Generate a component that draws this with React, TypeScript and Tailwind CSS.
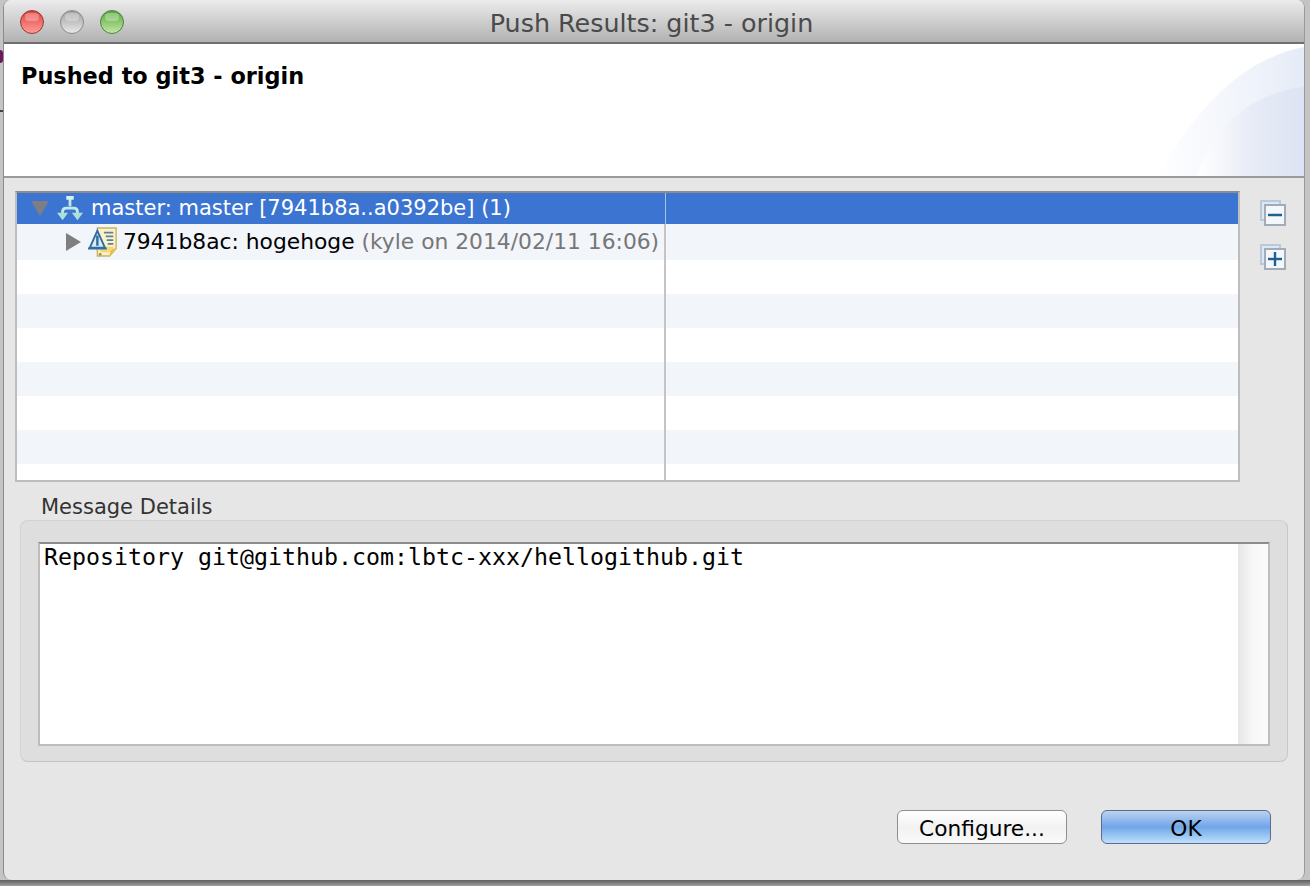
import React from 'react';

const font = { sans: 'font-["DejaVu_Sans",sans-serif]', mono: 'font-["DejaVu_Sans_Mono",monospace]' };

const TrafficLight: React.FC<{ className: string }> = ({ className }) => (
    <div className={`relative w-[24px] h-[24px] rounded-full border ${className}`}>
        <div className="absolute left-[4px] top-[2px] w-[14px] h-[8px] rounded-full bg-white/30" />
    </div>
);

const BranchIcon = () => (
    <svg width="26" height="28" viewBox="0 0 28 28" fill="none">
        <path d="M14 2v9M6 20v-3q0-4 4-4h8q4 0 4 4v3" stroke="#c4e9e3" strokeWidth="3" />
        <rect x="10" y="0" width="8" height="4" fill="#d8f0ec" />
        <path d="M0 18h12l-6 8zM16 18h12l-6 8z" fill="#a9e0da" />
    </svg>
);

const CommitIcon = () => (
    <svg width="30" height="32" viewBox="0 0 32 32" fill="none">
        <path d="M10 1h20v22l-7 8H10z" fill="#fbf3c4" stroke="#c9b26a" strokeWidth="1.5" />
        <path d="M23 31l1-8h6z" fill="#e8c24a" />
        <path d="M13 27h10l5-6H13z" fill="#f5d873" />
        <path d="M17 6h10M19 10h8M20 14h7M21 18h6" stroke="#5c7fa6" strokeWidth="1.8" />
        <path d="M10 4L2 22h16z" fill="#dfeaf4" stroke="#2f6ea5" strokeWidth="2" />
        <path d="M10 9v11" stroke="#2f6ea5" strokeWidth="2.6" />
        <path d="M0 23h20" stroke="#2f6ea5" strokeWidth="2.2" />
        <circle cx="13" cy="29" r="1.4" fill="#a8874a" />
    </svg>
);

const StackIcon: React.FC<{ plus?: boolean }> = ({ plus }) => (
    <svg width="26" height="26" viewBox="0 0 26 26" fill="none">
        <rect x="1" y="1" width="19" height="19" fill="#dfe8f2" stroke="#b9c9dc" strokeWidth="2" />
        <rect x="5" y="5" width="20" height="20" fill="#f3f7fb" stroke="#a3abba" strokeWidth="2" />
        <path d="M8 15h14" stroke="#1f5f8f" strokeWidth="2.4" />
        {plus && <path d="M15 8v14" stroke="#1f5f8f" strokeWidth="2.4" />}
    </svg>
);

const rows = [
    'h-[36px] bg-[#f2f5fa]',
    'h-[34px] bg-white',
    'h-[34px] bg-[#f2f5fa]',
    'h-[34px] bg-white',
    'h-[34px] bg-[#f2f5fa]',
    'h-[34px] bg-white',
    'h-[34px] bg-[#f2f5fa]',
    'h-[16px] bg-white',
];

export default function App() {
    return (
        <div className={`relative w-[1310px] h-[886px] overflow-hidden bg-[#c4c4c4] pl-[3px] pr-[5px] ${font.sans}`}>
            {/* bits of the window behind */}
            <div className="absolute left-0 top-[50px] w-[3px] h-[13px] rounded-r-full bg-[#6a1a5c]" />
            <div className="absolute left-0 top-[110px] w-[3px] h-[2px] bg-[#444]" />
            <div className="absolute left-0 right-0 top-[880px] h-[6px] bg-gradient-to-b from-[#5f5f5f] to-[#a0a0a0]" />

            <div className="relative h-[880px] flex flex-col rounded-t-[8px] rounded-b-[8px] overflow-hidden bg-[#e6e6e6] border-l border-r border-l-[#8c8c8c] border-r-[#9a9a9a]">
                {/* title bar */}
                <div className="relative h-[44px] shrink-0 flex items-center justify-center bg-gradient-to-b from-[#ececec] to-[#b2b2b2] border-b-2 border-[#6f6f6f]">
                    <div className="absolute left-[16px] top-[10px] flex gap-[16px]">
                        <TrafficLight className="bg-gradient-to-b from-[#e03a3a] to-[#ff9a9a] border-[#8f3a3a]" />
                        <TrafficLight className="bg-gradient-to-b from-[#a0a0a0] to-[#e8e8e8] border-[#8a8a8a]" />
                        <TrafficLight className="bg-gradient-to-b from-[#56a83a] to-[#bfe8a0] border-[#4f7f43]" />
                    </div>
                    <span className="text-[25.4px] leading-none text-[#4a4a4a] pt-[5px] pr-[5px]">Push Results: git3 - origin</span>
                </div>

                {/* banner */}
                <div className="relative h-[134px] shrink-0 bg-white border-b-2 border-[#9a9a9a] px-[17px] pt-[17px]">
                    <svg className="absolute right-0 top-0" width="150" height="132" viewBox="0 0 150 132">
                        <defs>
                            <linearGradient id="sweep" x1="0" x2="1" y1="0" y2="0">
                                <stop offset="0" stopColor="#ffffff" />
                                <stop offset="0.7" stopColor="#eef2fa" />
                                <stop offset="1" stopColor="#e5ebf7" />
                            </linearGradient>
                            <linearGradient id="sweep2" x1="0" x2="1" y1="0" y2="0">
                                <stop offset="0" stopColor="#ffffff" />
                                <stop offset="0.5" stopColor="#e8ecf7" />
                                <stop offset="1" stopColor="#dce3f3" />
                            </linearGradient>
                        </defs>
                        <path d="M3 132C45 60 90 15 150 3V132z" fill="url(#sweep)" />
                        <path d="M43 132C55 90 90 50 150 43V132z" fill="url(#sweep2)" />
                    </svg>
                    <h1 className="relative text-[22.4px] leading-[30px] font-bold text-black">Pushed to git3 - origin</h1>
                </div>

                {/* results tree */}
                <div className="flex pl-[11px] pt-[13px] shrink-0">
                    <div className="w-[1225px] h-[291px] border-2 border-[#bdbdbd] border-t-[#8c8c8c] bg-white flex flex-col overflow-hidden">
                        <div className="h-[31px] shrink-0 flex bg-[#3b75d1]">
                            <div className="w-[649px] flex items-center border-r border-[#a9c1e6] text-white">
                                <svg className="ml-[14px]" width="18" height="15" viewBox="0 0 18 15"><path d="M0 0h18L9 15z" fill="#7d7d83" /></svg>
                                <div className="ml-[8px]"><BranchIcon /></div>
                                <span className="ml-[8px] pt-[1px] text-[21px] whitespace-nowrap">master: master [7941b8a..a0392be] (1)</span>
                            </div>
                        </div>
                        {rows.map((row, idx) => (
                            <div key={idx} className={`${row} shrink-0 flex`}>
                                <div className="w-[649px] flex items-center border-r-2 border-[#c4c4c4]">
                                    {idx === 0 && (
                                        <>
                                            <svg className="ml-[49px]" width="15" height="18" viewBox="0 0 15 18"><path d="M0 0l15 9L0 18z" fill="#7f7f7f" /></svg>
                                            <div className="ml-[7px]"><CommitIcon /></div>
                                            <span className="ml-[5px] pt-[1px] text-[21.8px] whitespace-nowrap text-black">7941b8ac: hogehoge <span className="text-[#777]">(kyle on 2014/02/11 16:06)</span></span>
                                        </>
                                    )}
                                </div>
                            </div>
                        ))}
                    </div>
                    <div className="ml-[20px] flex flex-col gap-[18px] pt-[9px]">
                        <StackIcon />
                        <StackIcon plus />
                    </div>
                </div>

                {/* message details */}
                <div className="pl-[37px] pt-[12px] text-[21px] leading-[26px] text-[#333]">Message Details</div>
                <div className="ml-[16px] w-[1268px] h-[242px] shrink-0 rounded-[8px] bg-[#dedede] border border-[#d2d2d2] border-b-[#c4c4c4] border-r-[#c8c8c8] pl-[17px] pt-[21px]">
                    <div className="w-[1232px] h-[204px] flex bg-white border-2 border-[#bdbdbd] border-t-[#8c8c8c]">
                        <div className={`flex-1 pl-[4px] text-[23.25px] leading-[26px] text-black whitespace-nowrap ${font.mono}`}>
                            Repository git@github.com:lbtc-xxx/hellogithub.git
                        </div>
                        <div className="w-[30px] shrink-0 bg-gradient-to-r from-[#e6e6e6] via-[#f8f8f8] to-[#fafafa]" />
                    </div>
                </div>

                {/* buttons */}
                <div className="flex justify-end gap-[34px] pr-[33px] pt-[48px]">
                    <button className="w-[170px] h-[34px] pt-[4px] rounded-[6px] border border-[#8f8f8f] bg-gradient-to-b from-[#ffffff] via-[#f2f2f2] to-[#fafafa] text-[21.7px] leading-none text-black">Configure...</button>
                    <button className="w-[170px] h-[34px] pt-[4px] rounded-[6px] border border-[#5f6a8c] bg-gradient-to-b from-[#bcd2f0] via-[#6fa6e8] to-[#bfe0fa] text-[21.7px] leading-none text-black">OK</button>
                </div>
            </div>
        </div>
    );
}
